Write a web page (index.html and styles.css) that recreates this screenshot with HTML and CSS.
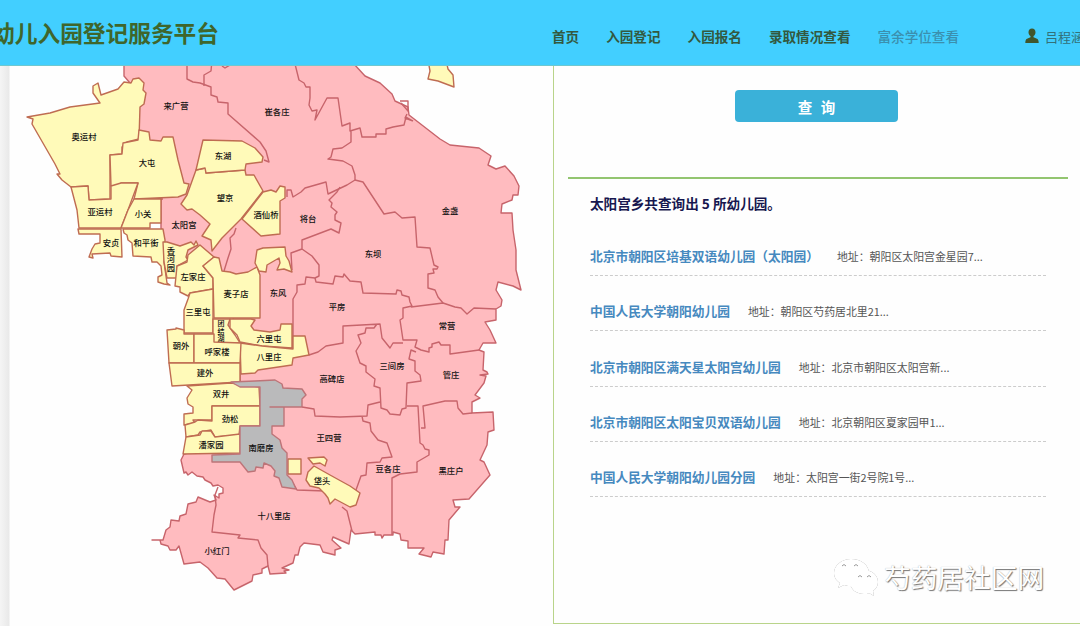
FILE: index.html
```html
<!DOCTYPE html>
<html lang="zh-CN">
<head>
<meta charset="utf-8">
<title>幼儿入园登记服务平台</title>
<link rel="stylesheet" href="styles.css">
</head>
<body>
<header class="topbar">
  <h1 class="brand">幼儿入园登记服务平台</h1>
  <nav class="nav">
    <a>首页</a><a>入园登记</a><a>入园报名</a><a>录取情况查看</a><a class="muted">富余学位查看</a>
  </nav>
  <div class="user">
    <svg class="user-icon" viewBox="0 0 14 16"><path d="M7 .5C4.8.5 3.500 2 3.500 4.200c0 1.700.8 3.200 2 3.900v1.200L2 10.700C.8 11.200.3 12.500.3 15h13.400c0-2.500-.5-3.800-1.700-4.300L8.500 9.300V8.100c1.200-.7 2-2.200 2-3.900C10.500 2 9.200.5 7 .5z"/></svg>
    <span>吕程涵</span>
  </div>
</header>
<main class="content">
  <section class="map-pane">
    <svg class="map" viewBox="10 66 543 560">
      <g class="pink">
        <path d="M124 60L124 76L130 83L138 100L138 190L161 199V228L164 242L205 270L240 330L240 440L184 454L181 460L184 473L186 472L188 475L192 472L197 476L203 477L205 480L211 483L213 486L218 485L223 488V493L219 494V498L214 495L216 500L210 502L198 497L196 502L188 504L186 514L180 516L179 521L171 520L170 527L166 530L163 540L152 540L160 540L161 544L168 546L170 550L176 550L179 546L184 564L200 562L208 568L217 578L225 579L234 590L252 581L253 575L262 573V569L268 566L270 574L286 573L284 571L289 570L282 568L293 563L295 555L298 555L300 547L304 543L320 545L323 552L335 555V550L341 548L332 540L333 537L349 544L351 530L355 534L375 532V535L381 535L382 538L384 535L393 535V532L400 534L401 540L408 541V548L424 548L419 554L431 557L433 552L444 554L445 540H448L449 520L460 507L455 507L453 500L469 499L490 475L484 462L480 460L487 445L488 432L494 430L493 412L472 413L472 402L480 398L475 395L484 383L486 376L480 375L488 374L487 372L483 370L484 352L479 350L483 343L496 343L490 330L485 322L496 320L496 309L501 306L502 300L496 290L498 282L513 286L521 290L516 270L516 250L513 230L512 213L501 213L502 204L512 200L513 195L518 195L519 186L514 176L505 166L496 169L488 165L491 156L479 148L450 145L440 139L409 115L408 107L395 101L392 94L380 83L365 76L354 64Z"/>
        <path d="M187 66V79L193 82L200 83L211 87V95L217 97L218 102L228 103V114L260 142L266 151L269 162L264 160"/>
        <path d="M204 86V75L211 71L212 60M222 66L225 68L230 65"/>
        <path d="M294 60L299 80L304 83L306 87H310V98L309 105L312 111L317 110L315 120L327 98H338L342 126L350 123V131L360 128L362 137H376V134H386V129L393 127L404 125L406 117L413 121M400 101H408V111L401 103M407 114L405 118L413 121M351 131V142L342 148L333 149L331 157L328 159L343 161L352 166L355 175V180L347 185L328 194L326 182L305 188L301 192L293 197L291 190H287V197"/>
        <path d="M355 180L363 182L384 214L395 212L402 218L415 217L417 247L430 248L434 265L438 267L437 269H433L434 273L428 274V288L435 290L438 297L443 303"/>
        <path d="M340 187L337 192L329 200L332 203L331 207L337 212L335 215V220L341 223L339 233L331 229L302 240V249L291 253L292 270M302 249L312 256L319 265V276L315 278L306 277L305 284L297 285V292L293 299V355"/>
        <path d="M315 278L316 282L333 284L335 276L343 277L344 274L350 281L361 282L363 293L396 294L397 290L401 291L402 295L409 297L410 302L412 306L403 308V318L400 320L403 340L417 340L415 347L421 350L429 352V348L432 347V344L439 342L441 345L450 345V354L479 350M411 307L443 303L455 307L461 308L467 314L474 308L496 309"/>
        <path d="M309 355L318 352L326 346L343 343V326L380 324L382 338L390 348L393 343H403M377 324L374 328H366L365 333L358 335L361 343L356 351L360 363L366 366V372L375 379L374 386L380 388L381 408L387 410L390 414L400 415L402 409L406 408L407 383L421 381L420 375L415 371V361L409 359L411 350L416 352"/>
        <path d="M407 406L418 406L420 443L423 445L425 449L429 450L429 455L417 462V472L400 474L392 478V535M421 428H425L423 406L445 401H457L458 408L463 414L472 413"/>
        <path d="M302 407L314 409L315 416L340 417L367 416L368 405L380 402M362 416L363 421L370 423L371 431L378 440L387 443L392 457L382 458L380 462L367 463L366 475L361 476L356 490M342 507L347 511L350 523L352 531"/>
        <path d="M293 483L297 490L325 491M218 487L215 495L216 505L214 515L212 532L240 535L238 538L258 540L261 548L267 555L268 566"/>
        <path d="M236 228L234 234L230 238L231 249L228 258L224 271M163 199H135"/>
      </g>
      <g class="yellow">
        <path d="M27 117L50 113L70 107L100 103L93 93L93 86L98 83L101 95L118 89L124 82L131 83L133 79L139 78L144 83L143 90L146 93L144 104L140 107L139 139L127 142L122 147L122 154L110 155L110 199L89 200L88 186L71 187L62 180L57 174L60 174L55 164L32 124L33 119Z"/>
        <path d="M110 155L122 154L123 143L138 140L139 130L149 132L150 140L161 141L163 137L173 137L178 160L184 183L189 184L186 194L178 197L134 199L138 183L121 183L120 185L111 186Z"/>
        <path d="M71 187L88 186L89 200L111 199V186L121 183H138L128 210L121 228H79L77 210Z"/>
        <path d="M134 199H161V223H150V228H121L128 210Z"/>
        <path d="M78 229H121L122 257L111 256L110 253L92 254L93 258L89 257L92 249L95 244L100 243V234H79Z"/>
        <path d="M123 229H163L165 240L164 262L167 283L170 285L164 284L158 282V277L162 275L161 266L157 262H152L151 257L133 256L132 243L128 240L127 235L124 233Z"/>
        <path d="M163 242H167L180 246L191 242L194 245L196 241L198 245L188 250L186 257L188 260L177 266V278H167L164 262Z"/>
        <path d="M200 245L214 257L203 266L213 278V289L190 293L188 296L180 292V287L175 286L177 266L187 262L188 255Z"/>
        <path d="M203 266L214 257L219 258L222 271L230 272L236 274L248 272L257 267L260 275V318H214L213 278Z"/>
        <path d="M190 293L213 289V333H184V310L188 299Z"/>
        <path d="M196 170L206 168V173L245 170L246 175L254 175L263 191L241 219L222 238L212 251L211 240L202 236L210 224L200 215L192 209L187 210L181 204L187 195Z"/>
        <path d="M203 140L242 141L255 148L263 157L262 162L246 164L245 170L206 173L205 168L196 170Z"/>
        <path d="M263 192L271 190L276 192L280 186L285 187V198L280 201V234L261 236L242 219Z"/>
        <path d="M257 250L263 248L285 247L286 256L289 261L292 272L284 269L277 270L280 263L279 258L267 265L266 272L259 271L255 263Z"/>
        <path d="M213 319H230L228 325L235 335L240 343H213Z"/>
        <path d="M230 319L251 319L255 320L251 326L254 330L270 332L280 330L281 324H292V348L262 346L240 342L237 335L230 328Z"/>
        <path d="M240 343L262 346L293 349V336H305L309 355L293 358L292 365L258 370L255 373L241 374Z"/>
        <path d="M167 330L176 329V328L184 330V334H194V363H169Z"/>
        <path d="M194 334H214V342L241 343L240 363H194Z"/>
        <path d="M169 363H240V382L172 386Z"/>
        <path d="M187 386L231 383L259 387L260 406H212V420L193 420L195 423L184 425V414L193 413V407L188 404L187 398L192 390Z"/>
        <path d="M212 406H260V426H240L239 435L215 437L211 430L200 432L198 435L186 437L185 425L195 422L198 420L212 421Z"/>
        <path d="M186 437L200 435L202 431H211L215 437L240 434V453L183 454Z"/>
        <path d="M288 459H301V474H288Z"/>
        <path d="M308 458L324 457L327 460L325 466L320 463L313 464Z"/>
        <path d="M308 472L314 466L330 475L350 486L360 493L356 505L350 507L335 499L330 504L328 498L325 494L319 488L310 486L306 480Z"/>
        <path d="M428 60H446L448 69L453 75L454 87L438 81L428 79L430 71Z"/>
      </g>
      <path class="grey" d="M231 382L255 381L275 380L282 384L283 388L302 389L306 395L302 399V407H270H284V426H272V434L280 440L282 448L287 453V475L292 480L296 489L282 487L279 478L274 476L275 471L271 466L264 463L263 468L256 467L255 471L248 472L240 462H212V455L240 454V426H260V387L240 387Z"/>
      <g class="labels">
        <text x="176" y="109">来广营</text><text x="277" y="115">崔各庄</text><text x="84" y="140">奥运村</text><text x="147" y="166">大屯</text><text x="223" y="159">东湖</text><text x="225" y="201">望京</text><text x="266" y="218">酒仙桥</text><text x="308" y="222">将台</text><text x="450" y="214">金盏</text><text x="100" y="215">亚运村</text><text x="143" y="217">小关</text><text x="184" y="228">太阳宫</text><text x="111" y="246">安贞</text><text x="146" y="246">和平街</text><text x="171" y="253.500">香</text><text x="171" y="262">河</text><text x="171" y="270.500">园</text><text x="193" y="280">左家庄</text><text x="236" y="297">麦子店</text><text x="278" y="296">东风</text><text x="373" y="257">东坝</text><text x="337" y="310">平房</text><text x="447" y="329">常营</text><text x="198" y="315">三里屯</text><text class="tiny" x="221" y="326">团</text><text class="tiny" x="221" y="333.500">结</text><text class="tiny" x="221" y="341">湖</text><text x="269" y="342">六里屯</text><text x="269" y="360">八里庄</text><text x="181" y="349">朝外</text><text x="217" y="355">呼家楼</text><text x="205" y="376">建外</text><text x="332" y="382">高碑店</text><text x="392" y="369">三间房</text><text x="451" y="378">管庄</text><text x="221" y="397">双井</text><text x="230" y="422">劲松</text><text x="211" y="448">潘家园</text><text x="261" y="451">南磨房</text><text x="329" y="441">王四营</text><text x="388" y="472">豆各庄</text><text x="451" y="474">黑庄户</text><text x="322" y="484">垡头</text><text x="274" y="519">十八里店</text><text x="217" y="554">小红门</text>
      </g>
    </svg>
  </section>
  <section class="result-pane">
    <button class="query">查 询</button>
    <div class="results">
      <h2 class="summary">太阳宫乡共查询出 5 所幼儿园。</h2>
      <ul class="list">
        <li><a>北京市朝阳区培基双语幼儿园（太阳园）</a><span>地址：朝阳区太阳宫金星园7...</span></li>
        <li><a>中国人民大学朝阳幼儿园</a><span>地址：朝阳区芍药居北里21...</span></li>
        <li><a>北京市朝阳区满天星太阳宫幼儿园</a><span>地址：北京市朝阳区太阳宫新...</span></li>
        <li><a>北京市朝阳区太阳宝贝双语幼儿园</a><span>地址：北京朝阳区夏家园甲1...</span></li>
        <li><a>中国人民大学朝阳幼儿园分园</a><span>地址：太阳宫一街2号院1号...</span></li>
      </ul>
    </div>
  </section>
</main>
<div class="watermark">
  <svg class="chat-icon" viewBox="0 0 46 38">
    <g class="bubble"><path d="M18 1C8 1 1 8 1 15c0 5 3 8 6 10l-2 5 6-3c3 1 5 1 8 1 9 0 17-5 17-13S28 1 18 1z"/><path d="M31 12c-8 0-14 5-14 12s6 12 14 12c2 0 4 0 5-1l5 3-1-5c3-2 5-5 5-9 0-7-6-12-14-12z"/></g>
    <path class="eyes" d="M9 8q2-3 4 0M21 8q2-3 4 0M25 19q2-3 4 0M34 19q2-3 4 0"/>
  </svg>
  <span>芍药居社区网</span>
</div>
</body>
</html>
```
FILE: styles.css
```css
* { box-sizing: border-box; }
body {
  margin: 0;
  width: 1080px;
  height: 626px;
  overflow: hidden;
  display: flex;
  flex-direction: column;
  background: #fefefe;
  font-family: "Noto Sans CJK SC", sans-serif;
}
h1, h2, ul { margin: 0; padding: 0; }
.topbar {
  height: 66px;
  flex: none;
  display: flex;
  align-items: center;
  background: #42cfff;
  border-bottom: 1px solid #6fc8cf;
  white-space: nowrap;
  overflow: hidden;
  color: #33593f;
}
.brand {
  width: 219px;
  flex: none;
  display: flex;
  justify-content: flex-end;
  padding-bottom: 1px;
  font-size: 22.7px;
  font-weight: 700;
  color: #3f662c;
}
.nav {
  display: flex;
  gap: 27px;
  margin-left: 333px;
  padding-top: 6px;
  font-size: 13.6px;
  font-weight: 700;
}
.nav .muted { color: #3b8fae; font-weight: 500; }
.user {
  display: flex;
  align-items: center;
  gap: 6px;
  margin-left: 66px;
  padding-top: 7px;
  font-size: 13px;
  color: #337078;
}
.user-icon { width: 14px; height: 16px; fill: #40562c; }
.content { flex: 1; display: flex; min-height: 0; }
.map-pane {
  width: 553px;
  flex: none;
  display: flex;
  padding-left: 10px;
  background: linear-gradient(90deg, #f5f5f5, #e9e9e9 9px, #fefefe 10px);
}
.map { width: 543px; height: 560px; }
.map path { stroke-width: 1.4; stroke-linejoin: round; }
.pink path { fill: none; stroke: #c7646b; }
.pink path:first-child { fill: #ffbbbf; }
.yellow path { fill: #fffab9; stroke: #bf6c52; }
.grey { fill: #bababb; stroke: #bd7478; }
.labels {
  font-size: 8.3px;
  font-weight: 500;
  fill: #111;
  text-anchor: middle;
}
.labels .tiny { font-size: 7px; }
.result-pane {
  flex: 1;
  height: 558px;
  display: flex;
  flex-direction: column;
  align-items: flex-start;
  padding: 24px 0 0 14px;
  border-left: 1px solid #b9d48a;
  border-bottom: 1px solid #b9d48a;
}
.query {
  width: 163px;
  height: 32px;
  margin-left: 167px;
  padding: 0;
  border: 0;
  border-radius: 4px;
  background: #3ab1d9;
  color: #fff;
  font: 700 14.5px "Noto Sans CJK SC", sans-serif;
  word-spacing: 5px;
}
.results {
  width: 500px;
  margin-top: 55px;
  padding: 14px 22px 0;
  border-top: 2px solid #93c570;
}
.summary {
  height: 20px;
  line-height: 20px;
  font-size: 13.6px;
  font-weight: 700;
  color: #17174f;
}
.list { list-style: none; padding-top: 8px; }
.list li {
  height: 55.2px;
  display: flex;
  align-items: flex-end;
  gap: 18px;
  padding-bottom: 9px;
  border-bottom: 1px dashed #ccc;
  line-height: 20px;
  white-space: nowrap;
}
.list a { font-size: 12.73px; font-weight: 700; color: #4689bf; }
.list span { font-size: 10.9px; color: #555; }
.watermark {
  position: absolute;
  left: 833px;
  top: 557px;
  display: flex;
  align-items: center;
  gap: 5px;
  font-size: 26.7px;
  line-height: 40px;
  color: #fff;
  text-shadow: 1px 1px 1px #777, 0 0 1px #aaa;
  white-space: nowrap;
}
.chat-icon { width: 46px; height: 38px; overflow: visible; }
.bubble { fill: #fff; filter: drop-shadow(.7px .8px .5px #888); }
.eyes { fill: none; stroke: #999; stroke-width: 1; }
```
